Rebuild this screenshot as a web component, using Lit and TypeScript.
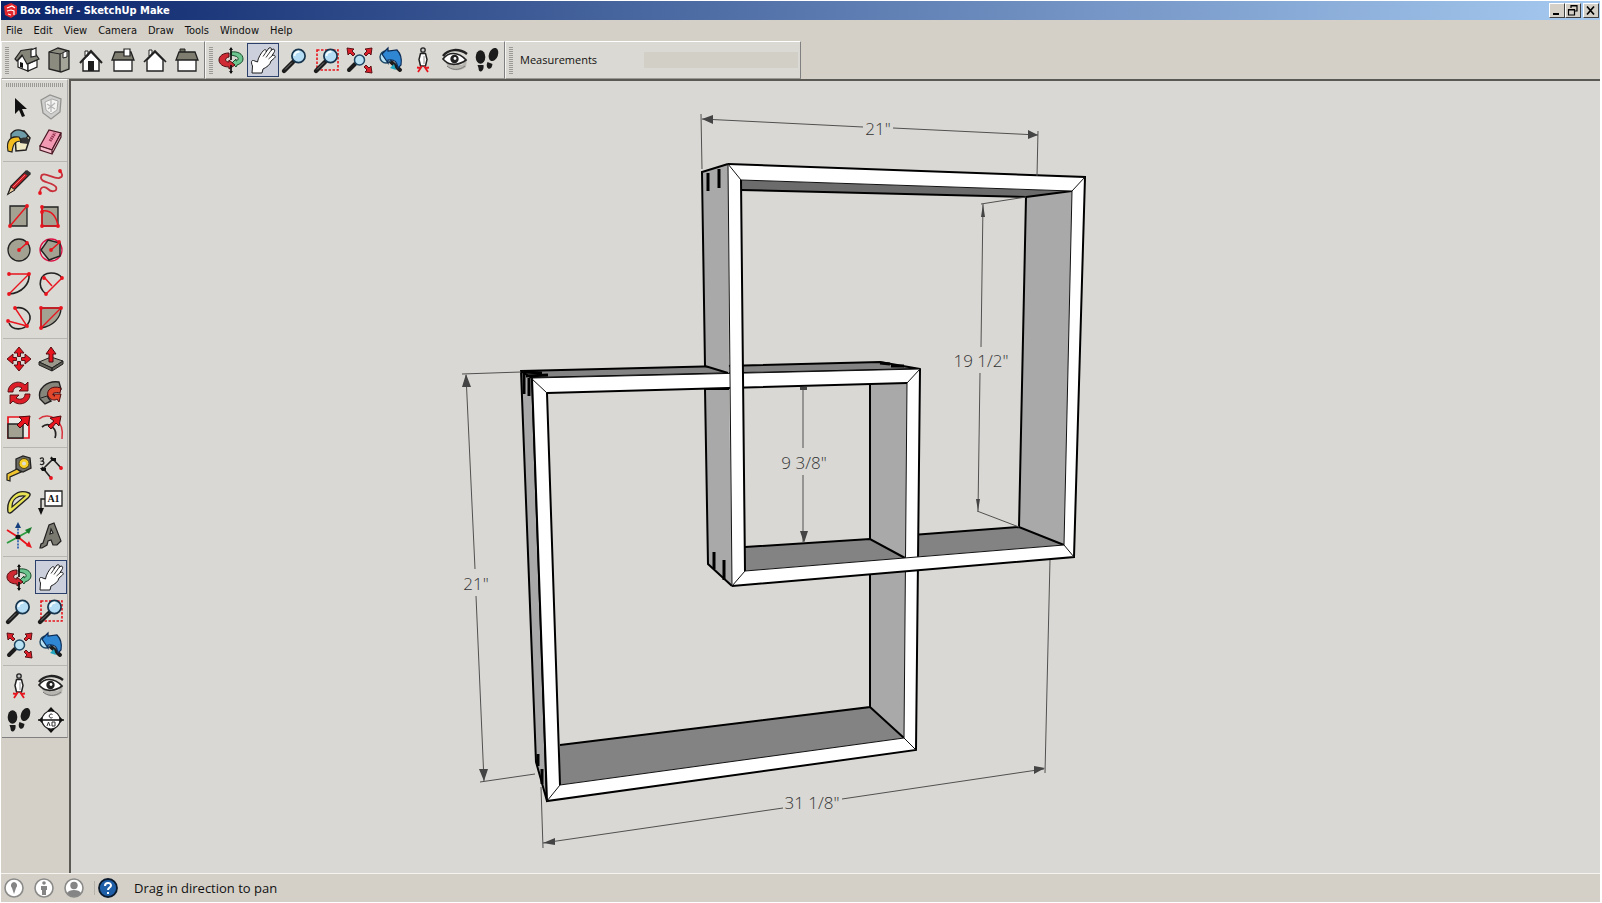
import { LitElement, html, svg, css } from "lit";
import { customElement, property } from "lit/decorators.js";

const houseFront = svg`<path d="M3 11h18v12H3z" fill="#fff" stroke="#222" stroke-width="1.3"/>`;

const lens = svg`
  <path d="M1 23l9-9" stroke="#1c1c1c" stroke-width="4.4" stroke-linecap="round"/>
  <path d="M2 21.500l7-7" stroke="#777" stroke-width="1"/>
  <circle cx="15.500" cy="8" r="6.600" fill="#b4dcf4" stroke="#16344c" stroke-width="1.700"/>
  <path d="M11.500 8a4 4 0 0 1 5-4" stroke="#f2fbff" stroke-width="2" fill="none"/>`;

const red = "#e8141e";
const node = (x: number, y: number) => svg`<circle cx=${x} cy=${y} r="1.9" fill=${red}/>`;

const icons: Record<string, unknown> = {
  iso: svg`
    <path d="M3 12l5-5 5 9v7l-10-4z" fill="#fff" stroke="#222" stroke-width="1.2"/>
    <path d="M13 16l9-4v7l-9 4z" fill="#fff" stroke="#222" stroke-width="1.2"/>
    <path d="M6 2.500L17 1l7 10-12 5-5-9-5 6-2-2z" fill="#86857a" stroke="#222" stroke-width="1.2"/>
    <path d="M16 2l5-2v8l-5 1z" fill="#fff" stroke="#222" stroke-width="1.2"/>
    <path d="M5 14v5l3 1v-5z" fill="#111"/>`,
  top: svg`
    <path d="M2 4l9-4 11 3v18l-8 3-12-3z" fill="#8c8b80" stroke="#222" stroke-width="1.3"/>
    <path d="M13 6v18M2 4l11 2 9-3" stroke="#222" stroke-width="1.2" fill="none"/>
    <path d="M14 6l7-3v17l-7 3z" fill="#a5a498"/>
    <path d="M16 4.500l4-1.500v6l-4 1z" fill="#fff" stroke="#222"/>`,
  front: svg`
    <path d="M4 12l8-8 8 8v11H4z" fill="#fff" stroke="#222" stroke-width="1.4"/>
    <path d="M6 3h3v5H6z" fill="#fff" stroke="#222"/>
    <path d="M1 15L12 3l11 12" fill="none" stroke="#222" stroke-width="2"/>
    <path d="M9 13h6v10H9z" fill="#1d1d1d"/>`,
  right: svg`${houseFront}
    <path d="M4 4h16l3 8H1z" fill="#7e7d70" stroke="#222" stroke-width="1.3"/>
    <path d="M13 1h6v7h-6z" fill="#fff" stroke="#222" stroke-width="1.2"/>`,
  back: svg`
    <path d="M6 2h3v6H6z" fill="#fff" stroke="#222"/>
    <path d="M4 12l8-8 8 8v11H4z" fill="#fff" stroke="#222" stroke-width="1.4"/>
    <path d="M1 14L12 3l11 11" fill="none" stroke="#222" stroke-width="1.7"/>`,
  left: svg`${houseFront}
    <path d="M5 1h5v4H5z" fill="#6d6c60" stroke="#222"/>
    <path d="M4 4h16l3 8H1z" fill="#7e7d70" stroke="#222" stroke-width="1.3"/>`,
  orbit: svg`
    <path d="M12 4c7-1 12 2 12 7 0 3-3 5-6 6l-1 2-4-4 4-4v2c3-1 3-4-1-5l-4-1z" fill="#6cc48e" stroke="#174b2a"/>
    <path d="M10 5C4 5 0 8 0 12c0 4 4 7 10 7v2l6-4-6-5v2c-4 0-5-4 0-5z" fill="#cf2a33" stroke="#4d0c10"/>
    <path d="M12 0v12M12 17v8" stroke="#111" stroke-width="1.7"/>
    <path d="M10 2l2-3 2 3zM10 23l2 3 2-3z" fill="#111"/>`,
  pan: svg`
    <path d="M1 25L1.500 18C0 15 0 12 2.500 12.500L6.500 14C7 10 10 5 12.500 2.500c2-2 3.500 0 2.500 1.500L18 0c2-1 3 .500 2 2.500L22 1c2 0 2 2 1 3.500l-2 3c3-1 4 1 2.500 2.500L20 13c-1 4-4 6-8 8l-1 4z" fill="#fff" stroke="#1d1d1d" stroke-width="1" stroke-linejoin="round"/>
    <path d="M12 8.500L15.500 3.500M15 9.500L20 2.500M17.500 11l4-3.500" stroke="#222" stroke-width=".9" fill="none"/>`,
  zoom: lens,
  window: svg`<path d="M2 2h21v20H2z" fill="none" stroke=${red} stroke-width="1.600" stroke-dasharray="2.500 1.500"/>${lens}`,
  extents: svg`
    <path d="M2 22l6-6" stroke="#1c1c1c" stroke-width="4" stroke-linecap="round"/>
    <circle cx="12.500" cy="12" r="5" fill="#b9e2f5" stroke="#1d4763" stroke-width="1.500"/>
    <path d="M0 0l7 1-2 2 3 3-2 2-3-3-2 2zM25 0l-7 1 2 2-3 3 2 2 3-3 2 2zM25 25l-7-1 2-2-3-3 2-2 3 3 2-2z" fill="#d81f2a" stroke="#4d0a0e" stroke-width=".9"/>`,
  previous: svg`
    <path d="M11 13l10 9" stroke="#1c1c1c" stroke-width="4" stroke-linecap="round"/>
    <path d="M11 20l4-4 2 6z" fill="#1fa5bf"/>
    <circle cx="7" cy="9" r="6" fill="#b9e2f5" stroke="#1d4763" stroke-width="1.400"/>
    <path d="M3 6l6-6v3l9-1c4 4 5 9 4 15l-3 3c-1-6-3-9-10-8v3z" fill="#2f86d3" stroke="#0d2c55" stroke-width="1.200"/>`,
  position: svg`
    <path d="M9.500 5.500h5l1.500 6-1.500 6.500h-5L8 11.500z" fill="#fff" stroke="#222" stroke-width="1.500"/>
    <circle cx="12" cy="2" r="2.200" fill="#c8c8c8" stroke="#222" stroke-width="1.300"/>
    <path d="M13 8v8" stroke="#999"/>
    <path d="M11 18l-4 6M13 18l4 6M9 20l-3-.500M15 20l3-.500" stroke=${red} stroke-width="1.800"/>`,
  eye: svg`
    <path d="M3 15c2 7 12 10 20 4l1-9-5 7z" fill="#aeaca8" opacity=".8"/>
    <path d="M0 11C5 4 15 3 23 12 17 17 7 18 2 13z" fill="#fff" stroke="#222" stroke-width="1.700"/>
    <path d="M0 8C5 1 16 0 24 6" stroke="#222" stroke-width="2.400" fill="none"/>
    <circle cx="11.500" cy="11" r="4.200" fill="#222"/><circle cx="12" cy="10.500" r="1.400" fill="#fff"/>
    <path d="M4 18c4 4 12 5 18 0" stroke="#777" fill="none"/>`,
  walk: svg`
    <ellipse cx="5.500" cy="9" rx="4.800" ry="6.800" fill="#1c1c1c"/><path d="M2.500 17h6c1 7-5 9-5 3z" fill="#1c1c1c"/>
    <ellipse cx="18.500" cy="6.500" rx="4.500" ry="6.800" transform="rotate(20 18.500 6.500)" fill="#1c1c1c"/><path d="M12.500 14l5 2c-1 8-8 5-5-2z" fill="#1c1c1c"/>`,
  section: svg`
    <path d="M0 12l12-13v26M24 12L12-1v26" fill="#111"/>
    <circle cx="12" cy="12" r="9" fill="#fff" stroke="#222" stroke-width="1.200"/>
    <path d="M-1 12h26" stroke="#111" stroke-width="1.500"/>
    <path d="M13.500 6.500a2 2 0 1 0 0 3M8 18l1.500-4 1.500 4M13 14v4h3v-4z" stroke="#333" fill="none"/>`,
  select: svg`<path d="M8 3v16l4-4 3 7 3-1-3-7h5z" fill="#111"/>`,
  component: svg`
    <path d="M2 5l9-5 11 4-1 13-9 7-8-6z" fill="#cfcfcd" stroke="#929290" stroke-width="1.300"/>
    <path d="M6 7l7-3 6 2-1 9-6 4-5-4z" fill="#f3f3f2" stroke="#aaa"/>
    <path d="M8 9l8 5M16 8l-7 6M12 5v12" stroke="#b5b5b5" stroke-width="1.200"/>`,
  paint: svg`
    <path d="M8 7l9-5 6 7-4 12-10 1z" fill="#efe9c4" stroke="#222" stroke-width="1.500"/>
    <path d="M4 5c5-7 14-4 17 2l-4 5C12 8 8 7 4 9z" fill="#6d9ba8" stroke="#222" stroke-width="1.300"/>
    <path d="M13 10c4-2 7-2 10 1l-2 4-8-1z" fill="#333"/>
    <path d="M1 22C-1 12 3 7 12 8l2 4c-6 0-8 3-9 11z" fill="#f4bd1f" stroke="#222" stroke-width="1.200"/>`,
  erase: svg`
    <path d="M1 17L10 1l12 3-9 17z" fill="#f29ab4" stroke="#4a1724" stroke-width="1.200"/>
    <path d="M1 17l12 4v4L1 21zM22 4v4l-9 17v-4z" fill="#f7c0cf" stroke="#4a1724" stroke-width="1.200"/>
    <path d="M11 12l5-8" stroke="#943251" stroke-width="3" stroke-dasharray="1.500 .700"/>`,
  line: svg`
    <path d="M1 24l3-8L19 1l4 3L8 19z" fill="#c91d25" stroke="#222" stroke-width="1.300"/>
    <path d="M1 24l3-7 4 3z" fill="#e5c89b" stroke="#222"/><path d="M17 3l3-3 4 3-3 3z" fill="#333"/>
    <path d="M6 17L18 5" stroke="#f0787a"/>`,
  freehand: svg`<path d="M1 23c0-7 5-7 8-4 4 4 10 2 8-2-3-5-16-4-15-10C3 0 14 9 20 8c5-1 3-5 1-7" fill="none" stroke="#c8303c" stroke-width="1.800"/>${node(1, 23)}${node(21, 1)}`,
  rect: svg`<path d="M3 2h17v20H3z" fill="#a3a292" stroke="#222" stroke-width="1.300"/><path d="M3 22L20 2" stroke=${red} stroke-width="1.400"/>${node(3, 22)}${node(20, 2)}`,
  rotrect: svg`<path d="M3 3h16v19H3z" fill="#a3a292" stroke="#222" stroke-width="1.300"/><path d="M3 3v19h16M3 7c8-1 14 4 16 15" fill="none" stroke=${red} stroke-width="1.500"/>${node(3, 3)}${node(3, 22)}${node(19, 22)}${node(3, 8)}`,
  circle: svg`<circle cx="12" cy="12" r="11" fill="#a3a292" stroke="#222" stroke-width="1.300"/><path d="M12 12l8-7" stroke=${red} stroke-width="1.500"/>${node(12, 12)}${node(20, 5)}`,
  polygon: svg`<circle cx="12" cy="12" r="11" fill="none" stroke="#d14" stroke-width="1.300"/><path d="M9 2l12 3v13l-11 4L2 12z" fill="#a3a292" stroke="#222" stroke-width="1.500"/><path d="M12 12l9-8" stroke=${red} stroke-width="1.500"/>${node(12, 12)}${node(20, 4)}`,
  arc: svg`<path d="M22 2c1 10-7 19-20 20" fill="none" stroke="#222" stroke-width="1.600"/><path d="M2 2h20L2 22" fill="none" stroke=${red} stroke-width="1.400"/>${node(2, 2)}${node(22, 2)}${node(2, 22)}`,
  arc2: svg`<path d="M7 22C-3 14 1 1 12 1c5 0 9 2 11 5" fill="none" stroke="#222" stroke-width="1.600"/><path d="M5 5l8 9M7 22L23 6" stroke=${red} stroke-width="1.500"/>${node(5, 6)}${node(7, 22)}${node(23, 6)}`,
  arc3: svg`<path d="M8 2c10-2 18 6 14 14-4 9-17 9-20 1" fill="none" stroke="#222" stroke-width="1.600"/><path d="M8 2l12 18L1 15" fill="none" stroke=${red} stroke-width="1.400"/>${node(8, 2)}${node(20, 20)}${node(1, 15)}`,
  pie: svg`<path d="M2 2h20c0 10-8 18-20 20z" fill="#a3a292" stroke="#222" stroke-width="1.300"/><path d="M2 22V2h20L2 22" fill="none" stroke=${red} stroke-width="1.400"/>${node(2, 2)}${node(22, 2)}${node(2, 22)}`,
  move: svg`<path d="M12 0l5 6h-3.500v3.500h-3V6H7zM12 24l5-6h-3.500v-3.500h-3V18H7zM0 12l6-5v3.500h3.500v3H6V17zM24 12l-6-5v3.500h-3.500v3H18V17z" fill=${red} stroke="#4d0a0e" stroke-width=".9"/>`,
  pushpull: svg`<path d="M0 15l12-5 12 4-11 7z" fill="#99988b" stroke="#222"/><path d="M0 15v3l13 6v-3zM24 14v3l-11 7v-3z" fill="#5f5e54" stroke="#222"/><path d="M12 0l5 7h-3v8h-4V7H7z" fill=${red} stroke="#4d0a0e"/>`,
  rotate: svg`<path d="M1 11C1 2 12-2 18 4l3-3v9h-9l3-3C10 4 6 7 6 11zM23 13c0 9-11 13-17 7l-3 3v-9h9l-3 3c5 3 9 0 9-4z" fill="#dc1d27" stroke="#4d0a0e" stroke-width=".9"/>`,
  follow: svg`<path d="M20 1C8-1-2 8 1 18l5 5 6-3C5 14 11 7 22 8z" fill="#86857b" stroke="#222" stroke-width="1.400"/><path d="M2 17l6-2 4 5" stroke="#222" fill="none"/><path d="M22 7c-9-3-15 2-13 8 2 4 7 5 9 3l2 3 2-8h-8l2 2c-4 0-3-5 5-3z" fill="#e2462b" stroke="#4d0a0e"/>`,
  scale: svg`<path d="M1 2h21v21H1z" fill="#e9e8e4" stroke=${red} stroke-width="1.700"/><path d="M1 9h15v14H1z" fill="#a3a292" stroke="#222" stroke-width="1.500"/><path d="M23 1l-2 10-3-3-5 5-3-3 5-5-3-3z" fill=${red} stroke="#4d0a0e"/>`,
  offset: svg`<path d="M0 4C9-4 26 4 23 24" fill="none" stroke="#d8303a" stroke-width="1.500"/><path d="M3 12c7-6 16 2 13 11" fill="none" stroke="#222" stroke-width="1.700"/><path d="M22 1l-2 10-3-3-5 6-3-3 6-5-4-3z" fill=${red} stroke="#4d0a0e"/>`,
  tape: svg`<path d="M9 3l7-3 7 2 1 10-8 4-7-3z" fill="#6a6a66" stroke="#222" stroke-width="1.300"/><circle cx="17" cy="7.500" r="5" fill="#f5cf28" stroke="#54440b"/><circle cx="17" cy="7.500" r="2" fill="#dcdcd8"/><path d="M10 13l4 3-11 5v4L0 24v-6z" fill="#f0c530" stroke="#222" stroke-width="1.200"/>`,
  dimension: svg`<path d="M4 13L14 3M12 22L3 11M23 13L12 1" stroke="#222" stroke-width="1.600"/><path d="M1 3c3-3 5 1 2 2 4 1 1 5-2 3" stroke="#222" fill="none" stroke-width="1.300"/>${node(12, 22)}${node(22, 12)}<path d="M1 12h6v3H3zM11 2h6v3h-4z"/>`,
  protractor: svg`<path d="M1 22C-1 9 10-2 22 3c2 1 1 3-1 5L6 21c-2 2-4 3-5 1z" fill="#e8e255" stroke="#222" stroke-width="1.400"/><path d="M5 17C5 9 11 5 18 6z" fill="#d9d8d4" stroke="#222" stroke-width="1.200"/>`,
  label: svg`<path d="M6 1h17v15H6z" fill="#fff" stroke="#222" stroke-width="1.300"/><path d="M6 9H2v12" stroke="#222" stroke-width="1.400" fill="none"/><path d="M-1 18h6l-3 7z" fill="#111"/><text class="glyph" x="14.500" y="12">A1</text>`,
  axes: svg`<path d="M11 13V0M11 13v12" stroke="#2358b0" stroke-width="1.600" stroke-dasharray="2 1.200"/><path d="M11 13l11-6M0 19l11-6" stroke="#2b9b3e" stroke-width="1.800"/><path d="M11 13l10 8M0 6l11 7" stroke=${red} stroke-width="1.800"/><path d="M8 4l3-6 3 6z" fill="#143f7c"/><path d="M18 6l7-3-3 7z" fill="#177a2b"/><path d="M19 22l6 2-3-7z" fill=${red}/><circle cx="11" cy="13" r="2.500" fill="#111"/>`,
  text3d: svg`<path d="M4 19L10 1l5-2 7 18-4 4h-4l-2-5-3 1-1 4-5 3H1l1-4zM11 10l3-1-2-4z" fill="#7a7970" fill-rule="evenodd" stroke="#222" stroke-width="1.200"/>`,
};

@customElement("tool-button")
class ToolButton extends LitElement {
  @property() icon = "";
  @property() label = "";
  @property({ type: Boolean }) active = false;

  static styles = css`
    :host { display: block; width: 32px; height: 34px; }
    button { display: grid; place-items: center; width: 32px; height: 34px; margin: 0; padding: 0; border: 1px solid transparent; background: transparent; }
    .active { border-color: #2b3f6b; background: #cbd0dc; }
    svg { width: 24px; height: 24px; overflow: visible; }
    .glyph { font: bold 10px "Liberation Serif", serif; text-anchor: middle; fill: #111; }
  `;

  render() {
    return html`<button type="button" class=${this.active ? "active" : ""} aria-label=${this.label} aria-pressed=${this.active}>
      <svg viewBox="0 0 24 24" fill="#111" aria-hidden="true">${icons[this.icon]}</svg>
    </button>`;
  }
}

@customElement("model-view")
class ModelView extends LitElement {
  static styles = css`
    :host { display: block; min-width: 0; min-height: 0; background: #d9d8d4; overflow: hidden; }
    svg { display: block; width: 100%; height: 100%; }
    .edge { stroke: #000; stroke-width: 2; stroke-linejoin: round; }
    .thin { stroke: #111; stroke-width: 1; fill: none; }
    .line { stroke: #000; stroke-width: 2; fill: none; }
    .notch { stroke: #000; stroke-width: 3; fill: none; }
    .side { fill: #a9a9a9; }
    .floor { fill: #838383; }
    .under { fill: #6c6c6c; }
    .white { fill: #fff; fill-rule: evenodd; }
    .dim { stroke: #505050; stroke-width: 1; fill: none; }
    .arrow { fill: #444; }
    text { font: 300 17px "Open Sans", "Noto Sans", sans-serif; fill: #333; text-anchor: middle; }
  `;

  render() {
    return html`<svg viewBox="71 81 1529 792" role="img" aria-label="Two interlocking box shelves with dimensions">
      <path class="dim" d="M1050 560L1045 773"/>

      <path class="under" d="M741 180L1072 191L1026 197L741 190z"/>
      <path class="side" d="M1026 197L1072 191L1064 545L1019 527z"/>
      <path class="line" d="M741 190L1026 197L1019 527"/>
      <path class="line" d="M1026 197L1072 191"/>

      <path class="floor" d="M560 745L870 707L904 738L560 785z"/>
      <path class="side" d="M870 383H907L904 738L870 707z"/>
      <path class="line" d="M560 745L870 707V383M870 707L904 738"/>

      <path class="floor" d="M745 547L870 539L905 558L745 571z"/>
      <path class="line" d="M745 547L870 539L905 558"/>
      <path class="floor" d="M912 535L1019 527L1064 545L912 557z"/>
      <path class="line" d="M912 535L1019 527L1064 545"/>

      <path class="side edge" d="M521 371L532 378L547 801L536 762z"/>
      <path class="floor edge" d="M521 371L880 362L920 369L532 378z"/>
      <path class="side" d="M703 172L728 164L729 374L705 366z"/>
      <path class="line" d="M728 373L705 366L702 172L728 164"/>

      <path class="white" d="M532 378L920 369L916 750L547 801zM547 393L560 785L904 738L907 383z"/>
      <path class="line" d="M532 378L547 801L916 750L920 369M547 393L907 383M547 393L560 785"/>
      <path class="thin" d="M532 378L920 369M560 785L904 738L907 383M531 378L547 393M907 383L920 369M904 738L916 750M560 785L547 801"/>
      <path class="side" d="M705 389H729L732 586L708 564z"/>
      <path class="line" d="M705 389L708 564L732 586M705 389H729"/>

      <path class="white" d="M728 164L1085 177L1074 557L732 586zM741 180L745 571L1064 545L1072 191z"/>
      <path class="line" d="M728 164L1085 177L1074 557L732 586M741 180L745 571"/>
      <path class="thin" d="M728 164L732 586M741 180L1072 191L1064 545L745 571M728 164L741 180M1072 191L1085 177M1064 545L1074 557M745 571L732 586"/>

      <path class="notch" d="M708 173V191M719 169V188M714 552V569M724 560V580M524 373V394M529 378V396M524 372L542 373M526 376L548 375M538 754V766M542 769V784"/>
      <path class="notch" d="M880 363L890 364M891 366L904 366"/>

      <path class="dim" d="M701 114L702 169M1038 131L1037 176M702 119L863 127M893 128L1038 135"/>
      <path class="arrow" d="M702 119L713 115V124zM1038 135L1028 130V139z"/>
      <path class="dim" d="M981 204L1026 197M977 511L1019 527M983 204L981 347M980 373L978 511"/>
      <path class="arrow" d="M983 204L981 217H985zM978 511L976 499H980z"/>
      <path class="dim" d="M803 387V448M803 475V543"/>
      <path class="arrow" d="M800 387H807V390H800zM800 531H808L804 543z"/>
      <path class="dim" d="M462 374L521 372M480 782L535 774M466 375L475 569M476 596L484 781"/>
      <path class="arrow" d="M466 374L462 387H471zM484 781L479 769H488z"/>
      <path class="dim" d="M541 787L543 848M543 843L783 808M842 799L1044 769"/>
      <path class="arrow" d="M543 843L555 838V845zM1045 768L1034 766V774z"/>

      <text x="878" y="135">21"</text>
      <text x="981" y="367">19 1/2"</text>
      <text x="804" y="469">9 3/8"</text>
      <text x="476" y="590">21"</text>
      <text x="812" y="809">31 1/8"</text>
    </svg>`;
  }
}

const menus = ["File", "Edit", "View", "Camera", "Draw", "Tools", "Window", "Help"];

const views = [["iso", "Iso"], ["top", "Top"], ["front", "Front"], ["right", "Right"], ["back", "Back"], ["left", "Left"]];

const camera = [["orbit", "Orbit"], ["pan", "Pan"], ["zoom", "Zoom"], ["window", "Zoom Window"], ["extents", "Zoom Extents"], ["previous", "Previous"], ["position", "Position Camera"], ["eye", "Look Around"], ["walk", "Walk"]];

const palette = [
  [["select", "Select"], ["component", "Make Component"], ["paint", "Paint Bucket"], ["erase", "Eraser"]],
  [["line", "Line"], ["freehand", "Freehand"], ["rect", "Rectangle"], ["rotrect", "Rotated Rectangle"], ["circle", "Circle"], ["polygon", "Polygon"], ["arc", "Arc"], ["arc2", "2 Point Arc"], ["arc3", "3 Point Arc"], ["pie", "Pie"]],
  [["move", "Move"], ["pushpull", "Push/Pull"], ["rotate", "Rotate"], ["follow", "Follow Me"], ["scale", "Scale"], ["offset", "Offset"]],
  [["tape", "Tape Measure"], ["dimension", "Dimension"], ["protractor", "Protractor"], ["label", "Text"], ["axes", "Axes"], ["text3d", "3D Text"]],
  [["orbit", "Orbit"], ["pan", "Pan"], ["zoom", "Zoom"], ["window", "Zoom Window"], ["extents", "Zoom Extents"], ["previous", "Previous"]],
  [["position", "Position Camera"], ["eye", "Look Around"], ["walk", "Walk"], ["section", "Section Plane"]],
];

const tool = ([icon, label]: string[]) => html`<tool-button .icon=${icon} .label=${label} .active=${icon === "pan"}></tool-button>`;

@customElement("app-root")
class AppRoot extends LitElement {
  static styles = css`
    :host { display: flex; flex-direction: column; box-sizing: border-box; height: 100vh; border: solid #fff; border-width: 1px 2px 1px 1px; background: #d4d0c8; color: #111; font: 11px/14px "DejaVu Sans Condensed", "Noto Sans", sans-serif; }
    button { font: inherit; color: inherit; margin: 0; padding: 0; border: 0; background: none; }
    .title { display: flex; align-items: center; height: 19px; padding: 0 1px 0 3px; background: linear-gradient(90deg, #0a246a, #a6caf0); color: #fff; }
    .title h1 { flex: 1; margin: 0 0 0 3px; font: bold 11px/14px "DejaVu Sans Condensed", sans-serif; }
    .logo { width: 13px; height: 15px; }
    .controls { display: flex; }
    .controls button { width: 16px; height: 15px; background: #d4d0c8; border: 1px solid; border-color: #fff #404040 #404040 #fff; }
    .controls button:last-child { margin-left: 2px; }
    .controls svg { display: block; width: 14px; height: 13px; }
    .menu { display: flex; gap: 11px; height: 21px; padding-left: 5px; align-items: center; }
    .bars { display: flex; height: 38px; }
    .bar { display: flex; align-items: center; box-sizing: border-box; background: #dbd9d3; border: 1px solid; border-color: #fff #808080 #9a9892 #f4f3f0; padding: 0 1px 0 2px; }
    .grip { width: 4px; height: 27px; margin: 0 2px 0 1px; background: repeating-linear-gradient(#9b9a95 0 1px, transparent 1px 2px); }
    .measure label { width: 124px; margin-left: 5px; font: 11px/16px "Open Sans", sans-serif; }
    .measure input { width: 154px; height: 16px; box-sizing: border-box; margin-right: 1px; padding: 0; border: 0; background: #d2cfc6; }
    .work { display: flex; flex: 1; min-height: 0; }
    .side { box-sizing: border-box; width: 68px; flex: none; padding: 0 1px; }
    .palette { padding: 3px 0 0 1px; background: #dbd9d3; border-top: 1px solid #fff; border-bottom: 1px solid #808080; border-right: 1px solid #aaa; }
    .handle { height: 4px; margin: 0 3px; background: repeating-linear-gradient(90deg, #9b9a95 0 1px, transparent 1px 2px); }
    .group { display: grid; grid-template-columns: 32px 32px; padding-top: 3px; }
    .group + .group { margin-top: 3px; border-top: 1px solid #b9b7b1; }
    model-view { flex: 1; border: solid #5b5954; border-width: 2px 0 0 2px; }
    .status { display: flex; align-items: center; height: 28px; border-top: 1px solid #f4f3f0; padding-left: 3px; font: 13px/18px "Open Sans", sans-serif; }
    .status button { width: 20px; height: 20px; margin-right: 10px; }
    .status svg { display: block; width: 20px; height: 20px; }
    .rule { width: 1px; height: 14px; margin-right: 3px; background: #b5b2ab; }
    .status p { margin: 0 0 0 6px; }
  `;

  render() {
    return html`
      <header class="title">
        <svg class="logo" viewBox="0 0 13 15" aria-hidden="true"><path d="M0 3l7-3 6 3v8l-6 4-6-3z" fill="#e0262c"/><path d="M3 5l5-2 3 2M3 8l4-1 3 1v4M4 11l3 1" fill="none" stroke="#fff" stroke-width="1.200"/></svg>
        <h1>Box Shelf - SketchUp Make</h1>
        <div class="controls">
          <button type="button" aria-label="Minimize"><svg viewBox="0 0 14 13"><path d="M3 9h6v2H3z"/></svg></button>
          <button type="button" aria-label="Restore"><svg viewBox="0 0 14 13"><path d="M5 4V1.500h6V7H9M5 2h6M2.500 5.500h6V11h-6zM2 6h7" fill="none" stroke="#000" stroke-width="1.200"/></svg></button>
          <button type="button" aria-label="Close"><svg viewBox="0 0 14 13"><path d="M3 2.500l7 8M10 2.500l-7 8" stroke="#000" stroke-width="1.700"/></svg></button>
        </div>
      </header>
      <nav class="menu" aria-label="Menu">${menus.map((m) => html`<button type="button">${m}</button>`)}</nav>
      <div class="bars">
        <div class="bar"><span class="grip"></span>${views.map(tool)}</div>
        <div class="bar"><span class="grip"></span>${camera.map(tool)}</div>
        <div class="bar measure"><span class="grip"></span><label for="vcb">Measurements</label><input id="vcb" type="text" disabled /></div>
      </div>
      <main class="work">
        <aside class="side">
          <div class="palette"><div class="handle"></div>${palette.map((g) => html`<div class="group">${g.map(tool)}</div>`)}</div>
        </aside>
        <model-view></model-view>
      </main>
      <footer class="status">
        <button type="button" aria-label="Geo-location"><svg viewBox="0 0 20 20"><circle cx="10" cy="10" r="9" fill="#fff" stroke="#8b8b89" stroke-width="1.600"/><path d="M10 4a3.500 3.500 0 0 1 2 6l-2 6-2-6a3.500 3.500 0 0 1 2-6" fill="#858585"/></svg></button>
        <button type="button" aria-label="Credits"><svg viewBox="0 0 20 20"><circle cx="10" cy="10" r="9" fill="#fff" stroke="#8b8b89" stroke-width="1.600"/><circle cx="10" cy="5" r="1.800" fill="#858585"/><path d="M7 8h6v4h-1v5H8v-5H7z" fill="#858585"/></svg></button>
        <button type="button" aria-label="Sign in"><svg viewBox="0 0 20 20"><circle cx="10" cy="10" r="9" fill="#fff" stroke="#8b8b89" stroke-width="1.600"/><circle cx="10" cy="7.500" r="3.700" fill="#858585"/><path d="M3 15c2-4 12-4 14 0-3 5-11 5-14 0" fill="#858585"/></svg></button>
        <span class="rule"></span>
        <button type="button" aria-label="Help"><svg viewBox="0 0 20 20"><circle cx="10" cy="10" r="9" fill="#1f5fa8" stroke="#0b1a2c" stroke-width="1.800"/><path d="M7 8c0-4 6-4 6-.500 0 2-3 2-3 4.500M10 14v2" fill="none" stroke="#fff" stroke-width="2"/></svg></button>
        <p>Drag in direction to pan</p>
      </footer>
    `;
  }
}
